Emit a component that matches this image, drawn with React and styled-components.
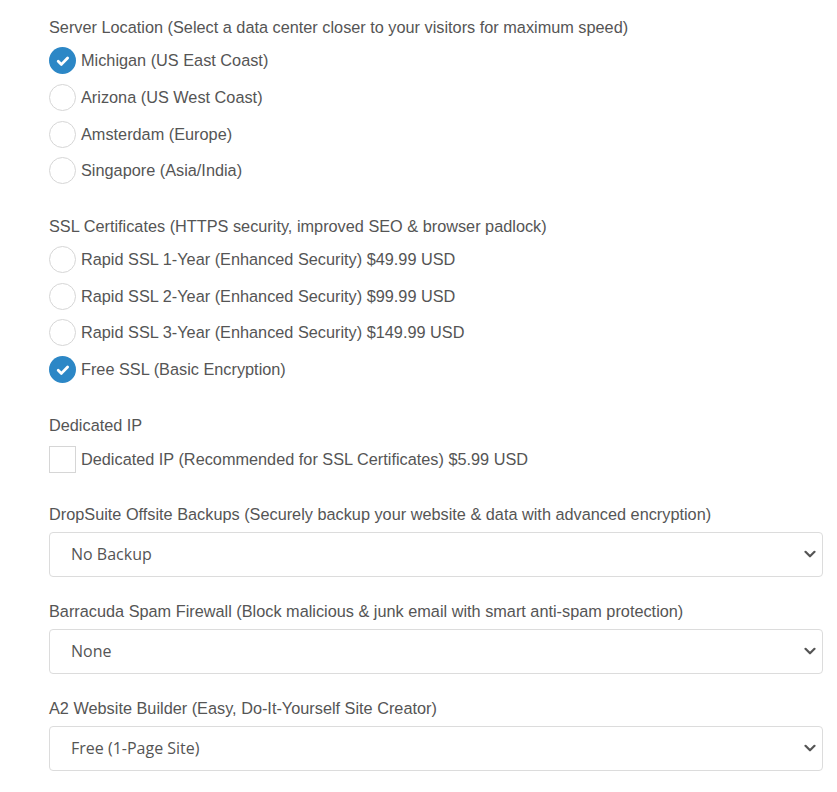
import styled, { createGlobalStyle } from "styled-components";

const GlobalStyle = createGlobalStyle`
  body {
    margin: 0;
    background: #fff;
    font-family: "Liberation Sans", Arial, sans-serif;
    color: #555;
  }
`;

const Form = styled.div`
  padding: 17px 14px 20px 49px;
  display: flex;
  flex-direction: column;
`;

const Group = styled.div`
  display: flex;
  flex-direction: column;
  gap: ${(p) => p.gap || 10.7}px;
  margin-bottom: ${(p) => p.after || 0}px;
`;

const Heading = styled.div`
  font-size: 16.3px;
  line-height: 20px;
  color: #555;
`;

const Option = styled.label`
  display: flex;
  align-items: center;
  gap: 5px;
  height: 26px;
  font-size: 16.3px;
  color: #555;
`;

const Radio = styled.span`
  width: 27px;
  height: 27px;
  box-sizing: border-box;
  border-radius: 50%;
  border: ${(p) => (p.checked ? "none" : "1px solid #d6d6d6")};
  background: ${(p) => (p.checked ? "#2c87c6" : "#fff")};
  display: flex;
  align-items: center;
  justify-content: center;
  flex-shrink: 0;
`;

const Box = styled.span`
  width: 27px;
  height: 27px;
  box-sizing: border-box;
  border: 1px solid #d6d6d6;
  background: #fff;
  flex-shrink: 0;
`;

const Select = styled.div`
  height: 45px;
  box-sizing: border-box;
  border: 1px solid #dcdcdc;
  border-radius: 4px;
  display: flex;
  align-items: center;
  justify-content: space-between;
  padding: 0 6px 0 21px;
  font-family: "Open Sans", sans-serif;
  font-size: 16px;
  color: #555;
`;

const Check = () => (
  <svg width="16" height="16" viewBox="0 0 16 16">
    <path d="M3.2 8.2l3.2 3.2 6.2-6.4" fill="none" stroke="#fff" strokeWidth="2.8" strokeLinecap="round" strokeLinejoin="round" />
  </svg>
);

const Chevron = () => (
  <svg width="12" height="8" viewBox="0 0 12 8">
    <path d="M1.5 1.8l4.5 4.5 4.5-4.5" fill="none" stroke="#555" strokeWidth="2.2" strokeLinecap="round" strokeLinejoin="round" />
  </svg>
);

const RadioRow = ({ label, checked }) => (
  <Option>
    <Radio checked={checked}>{checked && <Check />}</Radio>
    {label}
  </Option>
);

const SelectField = ({ label, value, after }) => (
  <Group gap={8} after={after}>
    <Heading>{label}</Heading>
    <Select>
      {value}
      <Chevron />
    </Select>
  </Group>
);

export default function App() {
  return (
    <>
      <GlobalStyle />
      <Form>
        <Group after={32}>
          <Heading>Server Location (Select a data center closer to your visitors for maximum speed)</Heading>
          <RadioRow label="Michigan (US East Coast)" checked />
          <RadioRow label="Arizona (US West Coast)" />
          <RadioRow label="Amsterdam (Europe)" />
          <RadioRow label="Singapore (Asia/India)" />
        </Group>
        <Group after={32}>
          <Heading>SSL Certificates (HTTPS security, improved SEO &amp; browser padlock)</Heading>
          <RadioRow label="Rapid SSL 1-Year (Enhanced Security) $49.99 USD" />
          <RadioRow label="Rapid SSL 2-Year (Enhanced Security) $99.99 USD" />
          <RadioRow label="Rapid SSL 3-Year (Enhanced Security) $149.99 USD" />
          <RadioRow label="Free SSL (Basic Encryption)" checked />
        </Group>
        <Group gap={12} after={31}>
          <Heading>Dedicated IP</Heading>
          <Option>
            <Box />
            Dedicated IP (Recommended for SSL Certificates) $5.99 USD
          </Option>
        </Group>
        <SelectField
          label="DropSuite Offsite Backups (Securely backup your website & data with advanced encryption)"
          value="No Backup"
          after={24}
        />
        <SelectField
          label="Barracuda Spam Firewall (Block malicious & junk email with smart anti-spam protection)"
          value="None"
          after={24}
        />
        <SelectField
          label="A2 Website Builder (Easy, Do-It-Yourself Site Creator)"
          value="Free (1-Page Site)"
        />
      </Form>
    </>
  );
}
